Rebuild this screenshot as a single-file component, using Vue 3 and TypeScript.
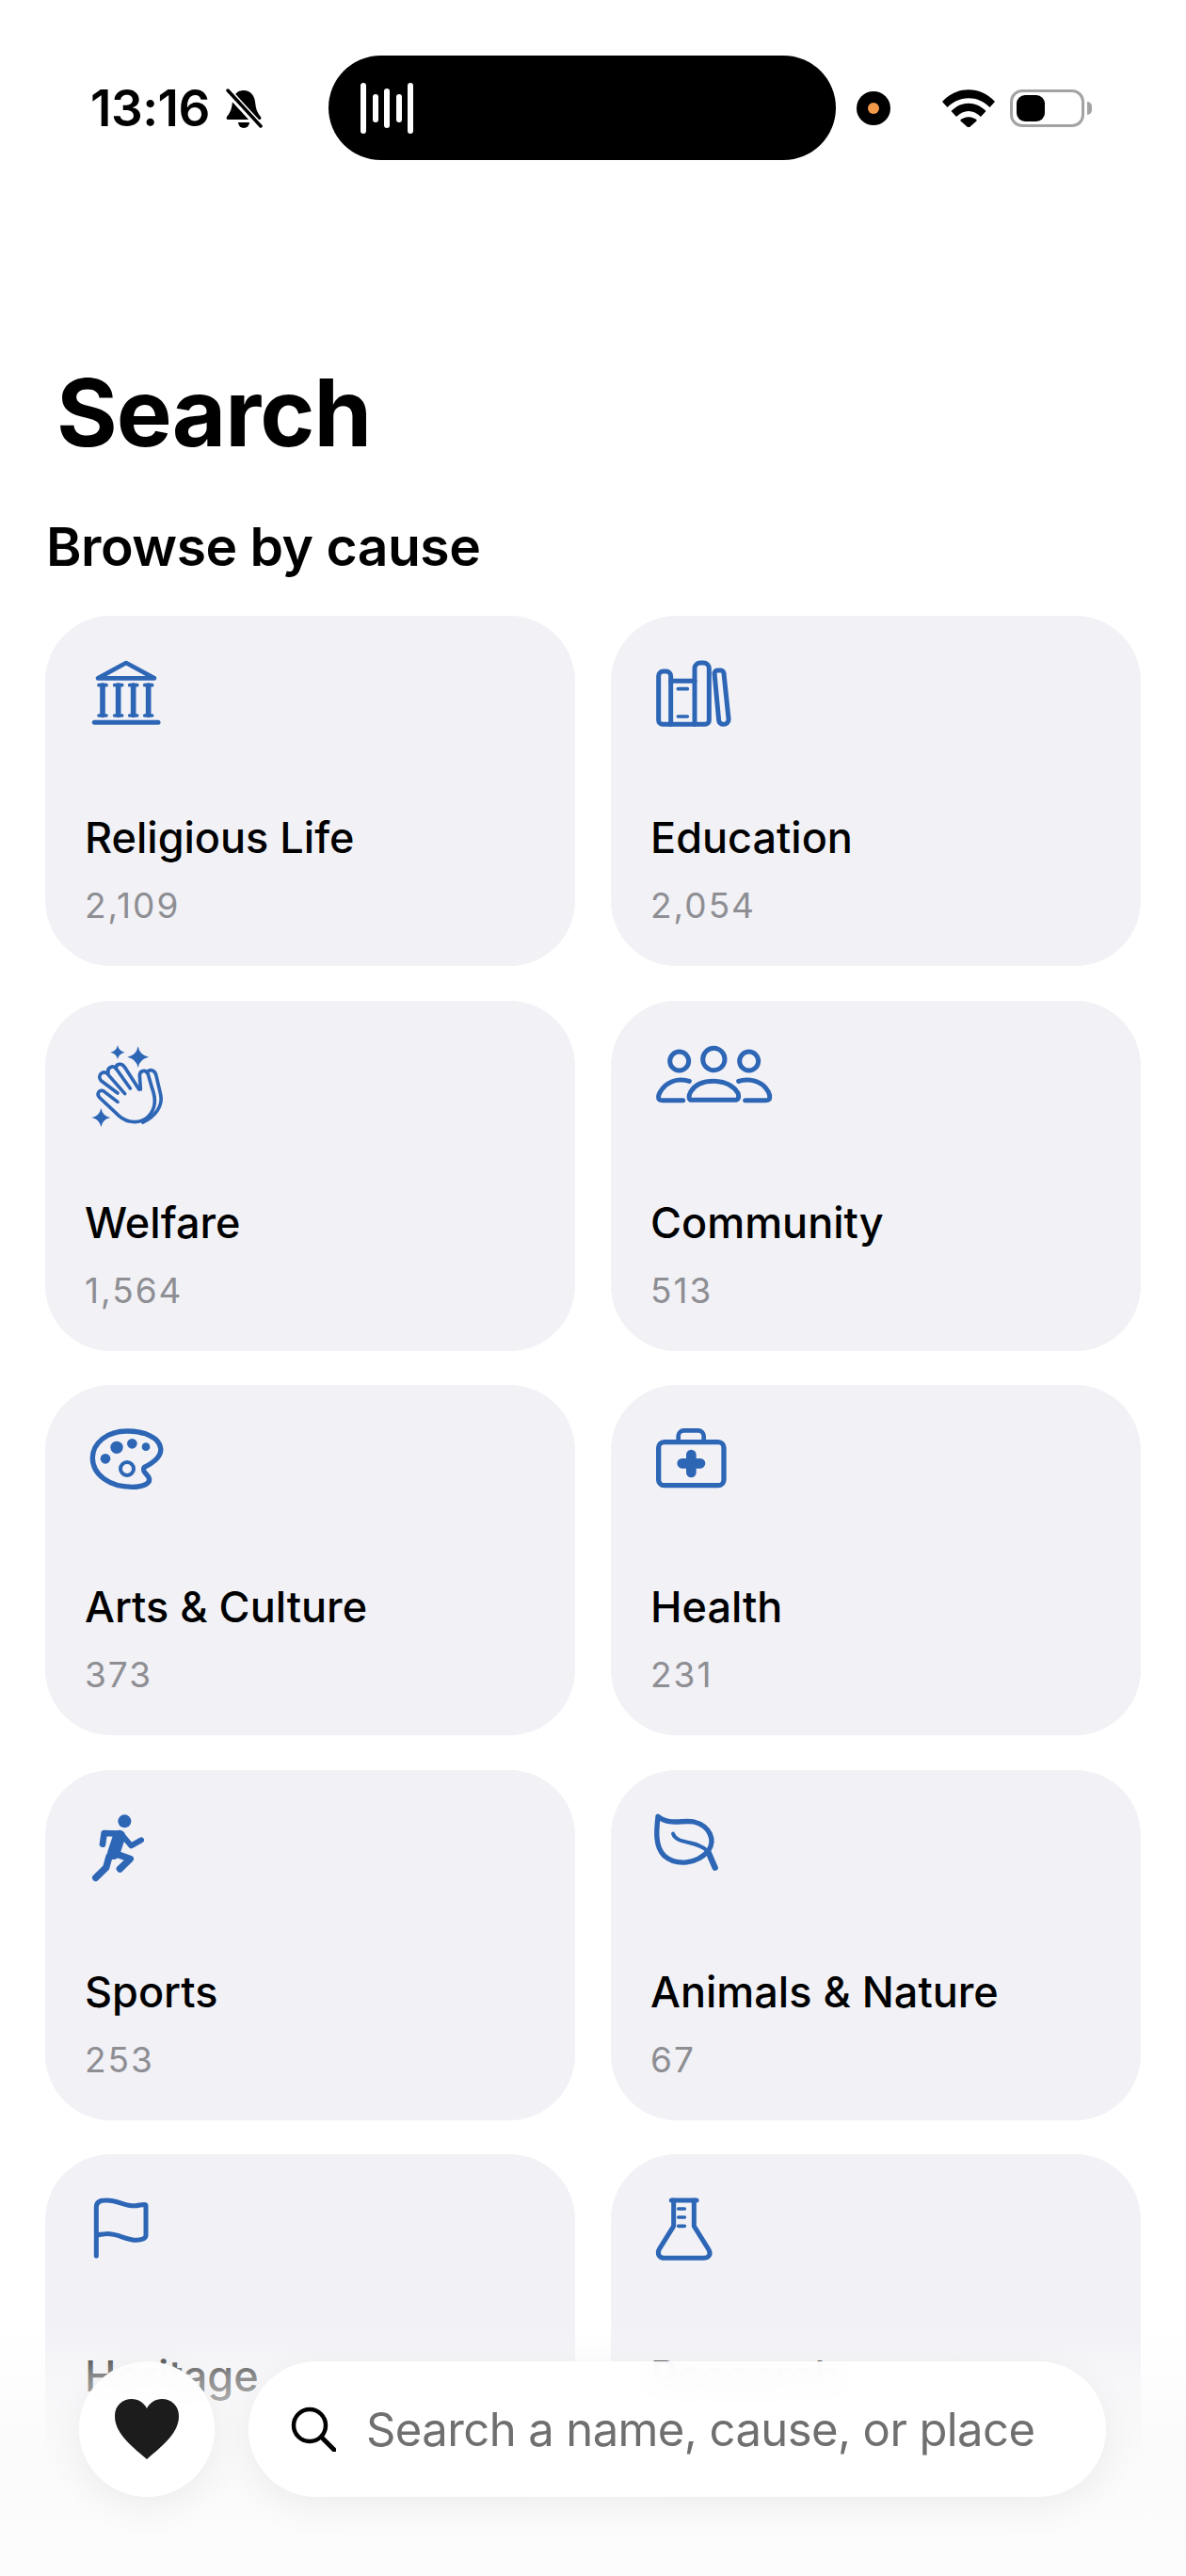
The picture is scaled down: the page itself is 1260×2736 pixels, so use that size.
<template>
  <div class="page">
    <div class="status-bar">
      <span class="time">13:16</span>
      <svg class="bell" viewBox="0 0 40 44" width="40" height="44">
        <path d="M20 3c-7 0-11 5-12 12-1 8-2 11-6 16-1 2 0 3 2 3h32c2 0 3-1 2-3-4-5-5-8-6-16-1-7-5-12-12-12z" fill="#000" />
        <path d="M14 37a6 6 0 0 0 12 0z" fill="#000" />
        <path d="M3 4l34 37" stroke="#fff" stroke-width="8" />
        <path d="M3 3l35 38" stroke="#000" stroke-width="3.5" stroke-linecap="round" />
      </svg>
      <div class="island">
        <span v-for="(bar, i) in audioBars" :key="i" class="audio-bar" :style="{ height: bar + 'px' }"></span>
      </div>
      <div class="camera"><span class="camera-dot"></span></div>
      <svg class="wifi" viewBox="0 0 56 40" width="56" height="40">
        <path d="M0 13C15-4 41-4 56 13l-5.500 6C38 6 18 6 5.500 19z" fill="#000" />
        <path d="M9.500 23C20 12 36 12 46.500 23l-5.500 6C33 21 23 21 15 29z" fill="#000" />
        <path d="M19 33c5-5 13-5 18 0l-9 8z" fill="#000" />
      </svg>
      <div class="battery">
        <div class="battery-body"><span class="battery-level"></span></div>
        <span class="battery-tip"></span>
      </div>
    </div>

    <h1 class="title">Search</h1>
    <h2 class="subtitle">Browse by cause</h2>

    <div class="grid">
      <div v-for="cause in causes" :key="cause.name" class="card">
        <svg class="icon" :viewBox="cause.viewBox" width="130" height="100">
          <path
            v-for="(part, i) in cause.parts"
            :key="i"
            :d="part.d"
            :fill="part.fill ? '#2e66b6' : 'none'"
            :stroke="part.fill ? 'none' : '#2e66b6'"
            :stroke-width="part.w || 15"
            stroke-linecap="round"
            stroke-linejoin="round"
          />
        </svg>
        <div class="name">{{ cause.name }}</div>
        <div class="count">{{ cause.count }}</div>
      </div>
    </div>

    <div class="fade"></div>
    <div class="dock">
      <button class="heart-btn">
        <svg viewBox="0 0 68 64" width="68" height="64">
          <path d="M34 64C14 47 0 35 0 18 0 7 8 0 18 0c7 0 13 4 16 10C37 4 43 0 50 0c10 0 18 7 18 18 0 17-14 29-34 46z" fill="#1c1c1c" />
        </svg>
      </button>
      <div class="search-pill">
        <svg class="lens" viewBox="0 0 48 48" width="48" height="48">
          <circle cx="20" cy="20" r="17" fill="none" stroke="#000" stroke-width="4.500" />
          <path d="M32.500 32.500L46 46" stroke="#000" stroke-width="5" stroke-linecap="round" />
        </svg>
        <span class="placeholder">Search a name, cause, or place</span>
      </div>
    </div>
  </div>
</template>

<script setup lang="ts">
interface IconPart {
  d: string
  w?: number
  fill?: boolean
}

interface Cause {
  name: string
  count: string
  viewBox: string
  parts: IconPart[]
}

const audioBars = [54, 30, 42, 30, 54]

const dot = (x: number, y: number, r: number): IconPart => ({
  d: `M${x - r} ${y}a${r} ${r} 0 1 0 ${r * 2} 0a${r} ${r} 0 1 0 ${-r * 2} 0z`,
  fill: true
})

const ring = (x: number, y: number, r: number, w = 15): IconPart => ({
  d: `M${x - r} ${y}a${r} ${r} 0 1 0 ${r * 2} 0a${r} ${r} 0 1 0 ${-r * 2} 0z`,
  w
})

const star = (x: number, y: number, r: number): IconPart => {
  const c = r * 0.16
  return {
    d: `M${x} ${y - r}Q${x + c} ${y - c} ${x + r} ${y}Q${x + c} ${y + c} ${x} ${y + r}Q${x - c} ${y + c} ${x - r} ${y}Q${x - c} ${y - c} ${x} ${y - r}z`,
    fill: true
  }
}

// icon paths are in zoomed-in coordinates, three units to a pixel
const causes: Cause[] = [
  {
    name: 'Religious Life',
    count: '2,109',
    viewBox: '156 120 390 300',
    parts: [
      { d: 'M282 162L192 211H372Z', w: 14 },
      { d: 'M207 234V328M257 234V328M305 234V328M353 234V328', w: 17 },
      { d: 'M195 233h24M245 233h24M293 233h24M341 233h24M195 330h24M245 330h24M293 330h24M341 330h24', w: 11 },
      { d: 'M181 352H384', w: 15 }
    ]
  },
  {
    name: 'Education',
    count: '2,054',
    viewBox: '102 60 390 300',
    parts: [
      { d: 'M122 144a15 15 0 0 1 15-15h9a15 15 0 0 1 15 15V298H135a13 13 0 0 1-13-13Z' },
      { d: 'M237 298V120a18 18 0 0 1 18-18h10a18 18 0 0 1 18 18V285a13 13 0 0 1-13 13Z' },
      { d: 'M161 160H237M161 298H237' },
      { d: 'M184 185H214M184 273H214', w: 11 },
      { d: 'M300 135a12 12 0 0 1 12-9h8a10 10 0 0 1 10 10L345 280a16 16 0 0 1-16 18h-2a14 14 0 0 1-13-13Z' }
    ]
  },
  {
    name: 'Welfare',
    count: '1,564',
    viewBox: '66 24 390 300',
    parts: [
      star(165, 80, 23),
      star(230, 95, 34),
      star(112, 288, 30),
      { d: 'M165 238L122 205C108 195 95 212 108 225L170 283C195 305 235 310 262 285C285 262 290 235 275 195L262 150C258 135 238 135 235 152L238 198', w: 11 },
      { d: 'M233 198L188 128C178 112 158 116 160 132', w: 11 },
      { d: 'M205 195L160 132C150 120 130 128 135 145', w: 11 },
      { d: 'M188 212L132 148C118 135 98 155 112 170L165 210', w: 11 },
      { d: 'M258 145C268 130 285 138 288 155L302 215C310 250 285 285 245 303', w: 11 }
    ]
  },
  {
    name: 'Community',
    count: '513',
    viewBox: '72 24 390 300',
    parts: [
      ring(158, 108, 30),
      ring(268, 102, 35),
      ring(380, 108, 30),
      { d: 'M197 232C190 232 185 222 195 205C210 180 240 172 268 172C300 172 330 185 345 210C350 225 345 232 335 232Z' },
      { d: 'M190 172C170 165 140 165 115 185C100 198 90 215 92 225C92 232 97 233 105 233H170' },
      { d: 'M347 172C367 165 400 165 425 185C440 198 448 215 446 225C446 232 441 233 433 233H368' }
    ]
  },
  {
    name: 'Arts & Culture',
    count: '373',
    viewBox: '66 21 390 300',
    parts: [
      { d: 'M250 175C280 160 305 140 302 115C298 80 250 60 195 60C130 60 85 100 85 145C85 200 140 238 210 238C250 238 270 225 265 210C260 195 240 190 250 175Z', w: 16 },
      dot(162, 112, 20),
      dot(211, 100, 16),
      dot(255, 110, 13),
      dot(126, 148, 16),
      ring(195, 180, 21, 12)
    ]
  },
  {
    name: 'Health',
    count: '231',
    viewBox: '72 21 390 300',
    parts: [
      { d: 'M110 95H282a18 18 0 0 1 18 18V215a18 18 0 0 1-18 18H110a18 18 0 0 1-18-18V113a18 18 0 0 1 18-18Z', w: 16 },
      { d: 'M155 92V76a18 18 0 0 1 18-18h45a18 18 0 0 1 18 18V92', w: 14 },
      { d: 'M196 135V192M167 163H225', w: 32 }
    ]
  },
  {
    name: 'Sports',
    count: '253',
    viewBox: '66 15 390 300',
    parts: [
      dot(187, 70, 21),
      { d: 'M117 143L122 108L172 110', w: 20 },
      { d: 'M170 118L152 172', w: 40 },
      { d: 'M180 115L208 148L240 130', w: 18 },
      { d: 'M138 182L128 218L95 250', w: 22 },
      { d: 'M155 172L205 190L172 222', w: 22 }
    ]
  },
  {
    name: 'Animals & Nature',
    count: '67',
    viewBox: '72 15 390 300',
    parts: [
      { d: 'M90 55C85 100 80 150 110 180C150 215 215 205 250 165C275 130 255 85 205 72C170 65 125 85 90 55Z', w: 16 },
      { d: 'M138 110C150 145 215 130 248 165', w: 12 },
      { d: 'M250 167L272 218', w: 19 }
    ]
  },
  {
    name: 'Heritage',
    count: '58',
    viewBox: '66 39 390 300',
    parts: [
      { d: 'M97 255V100C97 85 107 78 125 78C165 75 190 100 225 95C240 93 255 88 255 95V190C255 200 240 205 225 205C190 205 165 182 125 185C110 185 97 190 97 190' }
    ]
  },
  {
    name: 'Research',
    count: '41',
    viewBox: '72 39 390 300',
    parts: [
      { d: 'M133 78H213' },
      { d: 'M140 78V160L95 232C85 250 95 262 112 262H235C252 262 262 250 250 232L205 160V78' },
      { d: 'M155 105H175M155 132H175M155 160H175', w: 11 }
    ]
  }
]
</script>

<style>
html,
body {
  margin: 0;
  background: #fff;
}
</style>

<style scoped>
.page {
  position: relative;
  width: 1260px;
  height: 2736px;
  overflow: hidden;
  background: #fff;
  font-family: Inter, "Liberation Sans", sans-serif;
  color: #000;
}

.status-bar {
  display: flex;
  align-items: center;
  height: 111px;
  padding: 59px 0 0 96px;
}

.time {
  width: 129px;
  font-size: 53px;
  font-weight: 600;
  letter-spacing: -0.5px;
}

.bell {
  margin-left: 14px;
}

.island {
  display: flex;
  align-items: center;
  gap: 6.5px;
  width: 539px;
  height: 111px;
  margin-left: 70px;
  padding-left: 34px;
  box-sizing: border-box;
  border-radius: 56px;
  background: #000;
}

.audio-bar {
  width: 6px;
  border-radius: 3px;
  background: #fff;
}

.camera {
  display: flex;
  align-items: center;
  justify-content: center;
  width: 36px;
  height: 36px;
  margin-left: 22px;
  border-radius: 50%;
  background: #000;
}

.camera-dot {
  width: 12px;
  height: 12px;
  border-radius: 50%;
  background: #f2994a;
}

.wifi {
  margin-left: 55px;
}

.battery {
  display: flex;
  align-items: center;
  margin-left: 16px;
}

.battery-body {
  display: flex;
  align-items: center;
  width: 79px;
  height: 40px;
  padding-left: 4px;
  box-sizing: border-box;
  border: 3px solid #a3a3a3;
  border-radius: 13px;
}

.battery-level {
  width: 30px;
  height: 28px;
  border-radius: 9px;
  background: #000;
}

.battery-tip {
  width: 5px;
  height: 14px;
  margin-left: 3px;
  border-radius: 0 5px 5px 0;
  background: #a3a3a3;
}

.title {
  margin: 208px 0 0 60px;
  font-size: 99px;
  line-height: 120px;
  font-weight: 700;
  letter-spacing: -1px;
}

.subtitle {
  margin: 48px 0 0 49px;
  font-size: 57px;
  line-height: 70px;
  font-weight: 600;
  letter-spacing: -0.5px;
}

.grid {
  display: grid;
  grid-template-columns: 563px 563px;
  gap: 36.5px 38px;
  margin-top: 38px;
  padding: 0 48px;
}

.card {
  height: 372px;
  padding: 36px 42px 0;
  box-sizing: border-box;
  border-radius: 70px;
  background: #f1f1f6;
}

.icon {
  display: block;
  margin-left: 2px;
  overflow: visible;
}

.name {
  margin-top: 73px;
  font-size: 45px;
  line-height: 54px;
  font-weight: 500;
}

.count {
  margin-top: 23px;
  font-size: 37px;
  line-height: 44px;
  letter-spacing: 2px;
  color: #8e8e93;
}

.fade {
  position: absolute;
  left: 0;
  right: 0;
  bottom: 0;
  height: 266px;
  background: linear-gradient(to bottom, rgba(255, 255, 255, 0) 0%, rgba(252, 252, 252, 0.55) 20%, rgba(250, 250, 250, 0.95) 50%, #fcfcfc 100%);
}

.dock {
  position: absolute;
  left: 84px;
  top: 2508px;
  display: flex;
  gap: 36px;
}

.heart-btn {
  display: flex;
  align-items: center;
  justify-content: center;
  width: 144px;
  height: 144px;
  padding: 0;
  border: 0;
  border-radius: 50%;
  background: rgba(255, 255, 255, 0.94);
  box-shadow: 0 10px 40px rgba(0, 0, 0, 0.06);
  backdrop-filter: blur(14px);
}

.search-pill {
  display: flex;
  align-items: center;
  gap: 32px;
  width: 911px;
  height: 144px;
  padding-left: 45px;
  box-sizing: border-box;
  border-radius: 72px;
  background: rgba(255, 255, 255, 0.94);
  box-shadow: 0 10px 40px rgba(0, 0, 0, 0.06);
  backdrop-filter: blur(14px);
}

.placeholder {
  font-size: 49px;
  letter-spacing: -0.6px;
  color: #6f6f6f;
}
</style>
